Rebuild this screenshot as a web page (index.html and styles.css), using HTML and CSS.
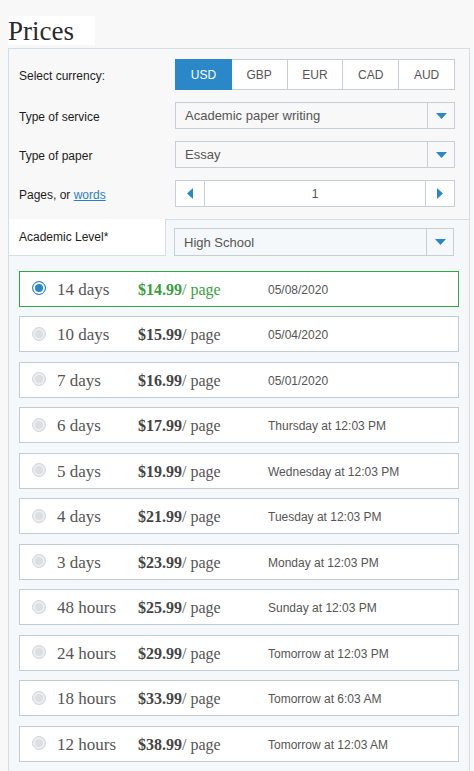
FILE: index.html
```html
<!DOCTYPE html>
<html>
<head>
<meta charset="utf-8">
<link rel="stylesheet" href="styles.css">
</head>
<body>
<div class="title">Prices</div>
<div class="panel">
  <div class="form">
    <div class="frow">
      <div class="flabel">Select currency:</div>
      <div class="currencies">
        <div class="cur active">USD</div>
        <div class="cur">GBP</div>
        <div class="cur">EUR</div>
        <div class="cur">CAD</div>
        <div class="cur">AUD</div>
      </div>
    </div>
    <div class="frow">
      <div class="flabel">Type of service</div>
      <div class="select"><span class="sval">Academic paper writing</span><span class="sarrow"><svg width="11" height="6" viewBox="0 0 11 6"><path d="M0 0H11L5.5 6Z" fill="#2b88c8"/></svg></span></div>
    </div>
    <div class="frow">
      <div class="flabel">Type of paper</div>
      <div class="select"><span class="sval">Essay</span><span class="sarrow"><svg width="11" height="6" viewBox="0 0 11 6"><path d="M0 0H11L5.5 6Z" fill="#2b88c8"/></svg></span></div>
    </div>
    <div class="frow">
      <div class="flabel">Pages, or <a class="link" href="#">words</a></div>
      <div class="stepper">
        <span class="sbtn"><svg width="6" height="11" viewBox="0 0 6 11"><path d="M6 0V11L0 5.5Z" fill="#2b88c8"/></svg></span>
        <span class="snum">1</span>
        <span class="sbtn right"><svg width="6" height="11" viewBox="0 0 6 11"><path d="M0 0V11L6 5.5Z" fill="#2b88c8"/></svg></span>
      </div>
    </div>
  </div>
  <div class="level">
    <div class="tab">Academic Level*</div>
    <div class="levelside">
      <div class="select lsel"><span class="sval">High School</span><span class="sarrow"><svg width="11" height="6" viewBox="0 0 11 6"><path d="M0 0H11L5.5 6Z" fill="#2b88c8"/></svg></span></div>
    </div>
  </div>
  <div class="options">
    <div class="opt selected"><span class="radio on"></span><span class="days">14 days</span><span class="price"><b>$14.99</b>/ page</span><span class="date">05/08/2020</span></div>
    <div class="opt"><span class="radio"></span><span class="days">10 days</span><span class="price"><b>$15.99</b>/ page</span><span class="date">05/04/2020</span></div>
    <div class="opt"><span class="radio"></span><span class="days">7 days</span><span class="price"><b>$16.99</b>/ page</span><span class="date">05/01/2020</span></div>
    <div class="opt"><span class="radio"></span><span class="days">6 days</span><span class="price"><b>$17.99</b>/ page</span><span class="date">Thursday at 12:03 PM</span></div>
    <div class="opt"><span class="radio"></span><span class="days">5 days</span><span class="price"><b>$19.99</b>/ page</span><span class="date">Wednesday at 12:03 PM</span></div>
    <div class="opt"><span class="radio"></span><span class="days">4 days</span><span class="price"><b>$21.99</b>/ page</span><span class="date">Tuesday at 12:03 PM</span></div>
    <div class="opt"><span class="radio"></span><span class="days">3 days</span><span class="price"><b>$23.99</b>/ page</span><span class="date">Monday at 12:03 PM</span></div>
    <div class="opt"><span class="radio"></span><span class="days">48 hours</span><span class="price"><b>$25.99</b>/ page</span><span class="date">Sunday at 12:03 PM</span></div>
    <div class="opt"><span class="radio"></span><span class="days">24 hours</span><span class="price"><b>$29.99</b>/ page</span><span class="date">Tomorrow at 12:03 PM</span></div>
    <div class="opt"><span class="radio"></span><span class="days">18 hours</span><span class="price"><b>$33.99</b>/ page</span><span class="date">Tomorrow at 6:03 AM</span></div>
    <div class="opt"><span class="radio"></span><span class="days">12 hours</span><span class="price"><b>$38.99</b>/ page</span><span class="date">Tomorrow at 12:03 AM</span></div>
  </div>
</div>
</body>
</html>
```

FILE: styles.css
```css
html, body {
  margin: 0;
  background: #f8f8f8;
}
body {
  padding: 16px 4px 0 8px;
  font-family: "Liberation Sans", Arial, sans-serif;
  font-size: 12px;
  color: #222;
}
.title {
  width: 87px;
  height: 29px;
  background: #fff;
  font-family: "Liberation Serif", "Times New Roman", serif;
  font-size: 27px;
  line-height: 30px;
  color: #2a2a2a;
  margin-bottom: 3px;
}
.panel {
  width: 460px;
  border: 1px solid #d3dee6;
  border-bottom: none;
}
.form {
  padding: 10px 14px 12px 10px;
  display: flex;
  flex-direction: column;
  gap: 12px;
}
.frow {
  display: flex;
  align-items: center;
  justify-content: space-between;
}
.flabel {
  color: #1c1c1c;
  padding-top: 2px;
}
.link {
  color: #2b7fc0;
}
.currencies {
  display: flex;
  width: 280px;
  height: 31px;
}
.cur {
  flex: 1;
  display: flex;
  align-items: center;
  justify-content: center;
  background: #fff;
  border: 1px solid #c6ced6;
  border-left: none;
  color: #555;
  font-size: 12px;
}
.cur:first-child {
  border-left: 1px solid #c6ced6;
}
.cur.active {
  background: #2b88c8;
  border-color: #2b88c8;
  color: #fff;
}
.select {
  width: 280px;
  height: 27px;
  box-sizing: border-box;
  border: 1px solid #c6ced6;
  display: flex;
  align-items: stretch;
}
.sval {
  flex: 1;
  display: flex;
  align-items: center;
  padding-left: 9px;
  font-size: 13px;
  color: #555;
}
.sarrow {
  width: 26px;
  border-left: 1px solid #c6ced6;
  display: flex;
  align-items: center;
  justify-content: center;
}
.stepper {
  width: 280px;
  height: 27px;
  box-sizing: border-box;
  border: 1px solid #c6ced6;
  background: #fff;
  display: flex;
}
.sbtn {
  width: 28px;
  display: flex;
  align-items: center;
  justify-content: center;
  border-right: 1px solid #c6ced6;
}
.sbtn.right {
  border-right: none;
  border-left: 1px solid #c6ced6;
}
.snum {
  flex: 1;
  display: flex;
  align-items: center;
  justify-content: center;
  color: #555;
  font-size: 12px;
}
.level {
  display: flex;
}
.tab {
  width: 146px;
  height: 36px;
  padding-left: 10px;
  background: #fff;
  border-right: 1px solid #d3dee6;
  border-bottom: 1px solid #d3dee6;
  display: flex;
  align-items: center;
  color: #1c1c1c;
}
.levelside {
  flex: 1;
  background: #f4f8fb;
  border-top: 1px solid #d3dee6;
  padding: 8px 15px 0 8px;
}
.lsel {
  width: 100%;
  height: 28px;
}
.options {
  background: #f4f8fb;
  padding: 14.5px 10px 20px 10px;
  display: flex;
  flex-direction: column;
  gap: 9.5px;
}
.opt {
  height: 36px;
  box-sizing: border-box;
  background: #fff;
  border: 1px solid #c2ccd5;
  display: flex;
  align-items: center;
  padding-left: 12px;
  padding-top: 2px;
}
.opt.selected {
  border-color: #2ea646;
}
.radio {
  width: 14px;
  height: 14px;
  box-sizing: border-box;
  border-radius: 50%;
  border: 1px solid #d4d8db;
  background: #dcdfe2;
  box-shadow: inset 0 0 0 2px #eceef0;
  margin-right: 11px;
  margin-top: -3px;
  flex: none;
}
.radio.on {
  border: 1.5px solid #2b88c8;
  background: #2b88c8;
  box-shadow: inset 0 0 0 2px #fff;
}
.days {
  width: 81px;
  font-family: "Liberation Serif", "Times New Roman", serif;
  font-size: 17px;
  color: #555;
}
.price {
  width: 130px;
  font-family: "Liberation Serif", "Times New Roman", serif;
  font-size: 16px;
  color: #555;
}
.price b {
  color: #444;
}
.selected .price, .selected .price b {
  color: #3a9e3e;
}
.date {
  font-size: 12px;
  color: #555;
}
```
